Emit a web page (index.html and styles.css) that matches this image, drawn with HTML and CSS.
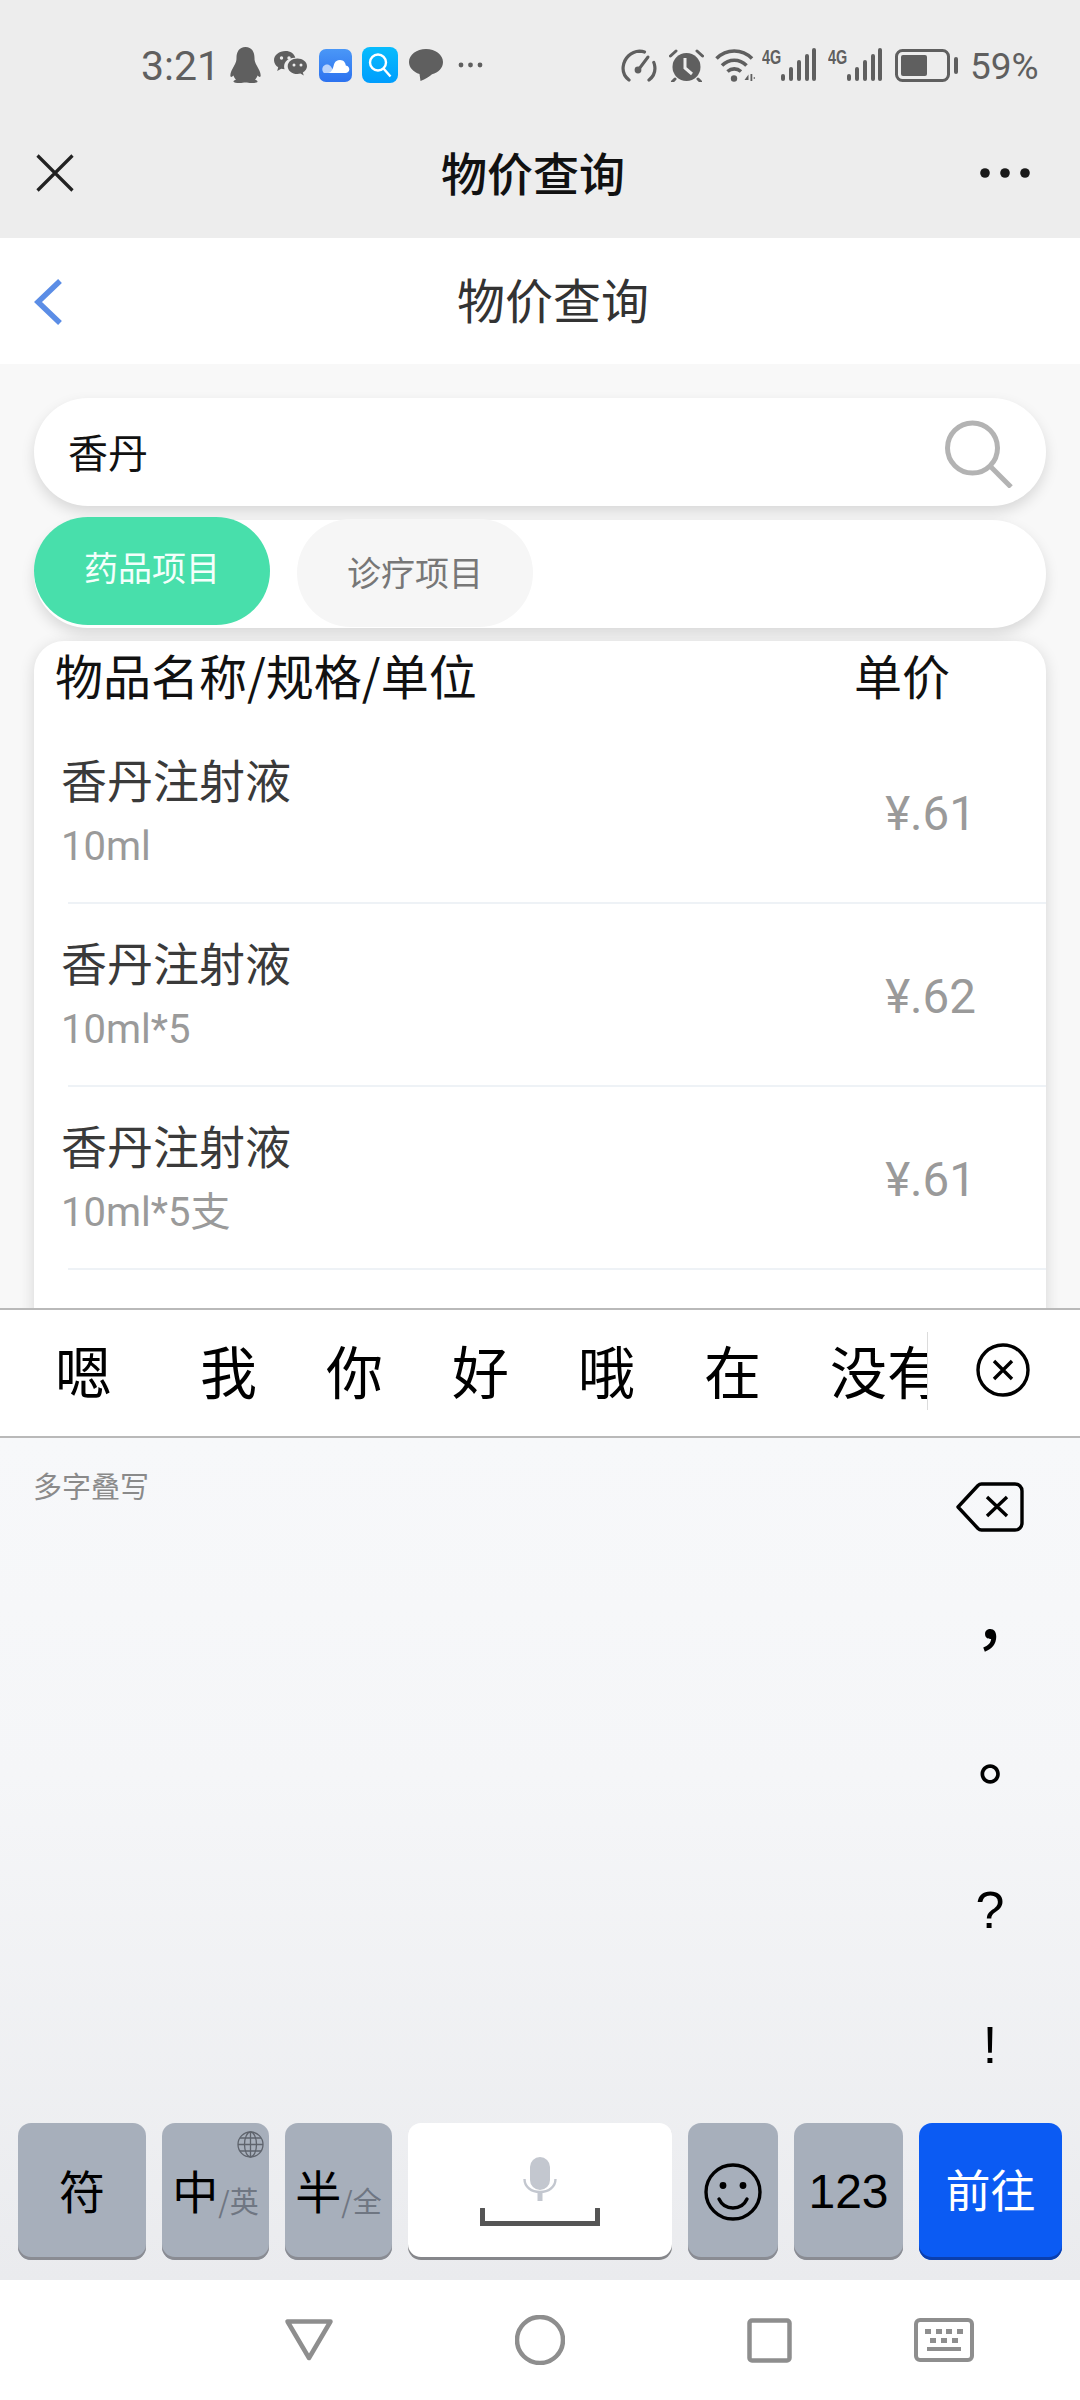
FILE: index.html
```html
<!DOCTYPE html>
<html lang="zh-CN">
<head>
<meta charset="utf-8">
<title>物价查询</title>
<link rel="stylesheet" href="styles.css">
</head>
<body>
<div class="screen">
  <header class="chrome">
    <div class="status">
      <div class="status-left">
        <span class="time">3:21</span>
        <svg class="ic-penguin" width="31" height="36" viewBox="0 0 31 36"><path fill="#5f5f5f" d="M15.500 0C9 0 6.500 5 6.500 11c0 3-.6 4.500-2.500 8-2 3.600-4 7-3.600 10 .3 1.500 1.600 1 3.100-.5.500 1.800 1.300 3 2.500 4-1.500.6-2.700 1.400-2.500 2.300.2 1 3 1.200 6 1.200 2.500 0 4-.5 6-.5s3.500.5 6 .5c3 0 5.800-.2 6-1.200.2-.9-1-1.700-2.500-2.300 1.200-1 2-2.200 2.500-4 1.500 1.500 2.800 2 3.100.5.4-3-1.600-6.400-3.600-10-1.900-3.500-2.500-5-2.500-8C24.500 5 22 0 15.500 0z"/></svg>
        <svg class="ic-wechat" width="33" height="29" viewBox="0 0 33 29"><path fill="#5f5f5f" d="M11.500 0C5.200 0 0 4 0 9.200c0 2.900 1.700 5.400 4.200 7.100L3.200 20l4-2.200c1.100.3 2.200.5 3.400.5-.3-1-.5-1.900-.5-2.900 0-5 4.600-8.700 10.300-8.700h.9C20.300 2.700 16.300 0 11.500 0z"/><path fill="#5f5f5f" d="M33 15.300c0-4.500-4.400-7.700-9.600-7.700-5.400 0-9.700 3.300-9.700 7.700s4.300 7.800 9.700 7.800c1 0 2.100-.2 3-.5l3.400 2-1-3c2.500-1.600 4.200-3.800 4.200-6.300z"/><circle cx="7.500" cy="7" r="1.700" fill="#ededed"/><circle cx="15" cy="7" r="1.700" fill="#ededed"/><circle cx="20" cy="14" r="1.500" fill="#ededed"/><circle cx="27" cy="14" r="1.500" fill="#ededed"/></svg>
        <svg class="ic-cloud" width="33" height="33" viewBox="0 0 33 33"><defs><linearGradient id="cloudBg" x1="0" y1="0" x2="0" y2="1"><stop offset="0" stop-color="#4a97f7"/><stop offset="1" stop-color="#2c72ef"/></linearGradient></defs><rect width="33" height="33" rx="7" fill="url(#cloudBg)"/><path fill="#b9d3fb" d="M5 24c-2.500-2-2.300-6.500 1-8 1.500-.7 3-.5 4 0 2 1 4 4 5 8z"/><path fill="#fff" d="M9 24c3 0 4-3 5-5 1-2.500 1-8 7-8 4 0 5.500 3 5.800 5.500 2.500.3 3.700 2.500 3.500 4.300-.2 2-1.800 3.200-3.800 3.200z"/></svg>
        <svg class="ic-find" width="36" height="36" viewBox="0 0 36 36"><defs><linearGradient id="findBg" x1="0" y1="0" x2="0" y2="1"><stop offset="0" stop-color="#07bcfd"/><stop offset="1" stop-color="#009dfd"/></linearGradient></defs><rect width="36" height="36" rx="8" fill="url(#findBg)"/><circle cx="16" cy="15.500" r="8" fill="none" stroke="#fff" stroke-width="2.400"/><path d="M21.500 21.500l7 8" stroke="#fff" stroke-width="2.400" fill="none"/></svg>
        <svg class="ic-bubble" width="34" height="33" viewBox="0 0 34 33"><path fill="#5f5f5f" d="M17 0C7.600 0 0 5.800 0 13c0 5.500 4.300 10 10.500 12l1 7c5-2 9-4.500 11.500-6.800C29.500 23.700 34 19 34 13 34 5.800 26.400 0 17 0z"/></svg>
        <svg class="ic-dots" width="25" height="6" viewBox="0 0 25 6"><circle cx="3" cy="3" r="2.400" fill="#5f5f5f"/><circle cx="12.500" cy="3" r="2.400" fill="#5f5f5f"/><circle cx="22" cy="3" r="2.400" fill="#5f5f5f"/></svg>
      </div>
      <div class="status-right">
        <svg class="ic-gauge" width="36" height="33" viewBox="0 0 36 33"><path d="M8 31C3.500 27.500 1.500 23 2.200 17.500 3.300 9 10 2.500 18.500 2.200c2 0 3.500.2 5 .8" fill="none" stroke="#5f5f5f" stroke-width="3.200" stroke-linecap="round"/><path d="M28 31c4.500-3.500 6.500-8 5.800-13.500-.2-1.500-.5-2.800-1-4" fill="none" stroke="#5f5f5f" stroke-width="3.200" stroke-linecap="round"/><path d="M18 20L27 8" stroke="#5f5f5f" stroke-width="3" stroke-linecap="round"/><circle cx="17" cy="21" r="3.400" fill="#5f5f5f"/></svg>
        <svg class="ic-alarm" width="35" height="33" viewBox="0 0 35 33"><circle cx="17.500" cy="18" r="14" fill="#5f5f5f"/><path d="M16 9v10l7 6" fill="none" stroke="#ededed" stroke-width="3"/><path d="M1.500 7L7 2M33.500 7L28 2M6 30l-2.500 2.500M29 30l2.500 2.500" stroke="#5f5f5f" stroke-width="3" stroke-linecap="round"/></svg>
        <svg class="ic-wifi" width="40" height="34" viewBox="0 0 40 34"><path d="M1.500 10.500C11.500 .5 27 .5 37 10.500M7 17.500c7-7 17.500-7 24.500 0M12.500 23.500c4-3.500 9.500-3.500 13.500 0" fill="none" stroke="#5f5f5f" stroke-width="3.600"/><circle cx="19" cy="30.500" r="3.200" fill="#5f5f5f"/><path d="M29.500 32l4-5.500v5.500zM35.500 26h1.800v7h-1.800zM38 30l2-1v2z" fill="#5f5f5f"/></svg>
        <div class="signal">
          <span class="net">4G</span>
          <svg width="35" height="33" viewBox="0 0 35 33"><rect x="0" y="26" width="4" height="7" rx="2" fill="#5f5f5f"/><rect x="8" y="19" width="4" height="14" rx="2" fill="#5f5f5f"/><rect x="16" y="12" width="4" height="21" rx="2" fill="#5f5f5f"/><rect x="24" y="6" width="4" height="27" rx="2" fill="#5f5f5f"/><rect x="31" y="0" width="4" height="33" rx="2" fill="#5f5f5f"/></svg>
        </div>
        <div class="signal">
          <span class="net">4G</span>
          <svg width="35" height="33" viewBox="0 0 35 33"><rect x="0" y="26" width="4" height="7" rx="2" fill="#5f5f5f"/><rect x="8" y="19" width="4" height="14" rx="2" fill="#5f5f5f"/><rect x="16" y="12" width="4" height="21" rx="2" fill="#5f5f5f"/><rect x="24" y="6" width="4" height="27" rx="2" fill="#5f5f5f"/><rect x="31" y="0" width="4" height="33" rx="2" fill="#5f5f5f"/></svg>
        </div>
        <svg class="ic-battery" width="63" height="33" viewBox="0 0 63 33"><rect x="1.500" y="1.500" width="52" height="30" rx="6" fill="none" stroke="#5f5f5f" stroke-width="3"/><rect x="6" y="6" width="26" height="21" rx="2" fill="#5f5f5f"/><rect x="59" y="8" width="4" height="17" rx="2" fill="#5f5f5f"/></svg>
        <span class="percent">59%</span>
      </div>
    </div>
    <div class="titlebar">
      <svg class="ic-close" width="38" height="38" viewBox="0 0 38 38"><path d="M1.500 1.500l35 35M36.500 1.500l-35 35" stroke="#222" stroke-width="3.200" fill="none"/></svg>
      <h1 class="app-title">物价查询</h1>
      <svg class="ic-more" width="50" height="10" viewBox="0 0 50 10"><circle cx="5" cy="5" r="4.800" fill="#1a1a1a"/><circle cx="25" cy="5" r="4.800" fill="#1a1a1a"/><circle cx="45" cy="5" r="4.800" fill="#1a1a1a"/></svg>
    </div>
  </header>

  <nav class="pagebar">
    <svg class="ic-back" width="30" height="48" viewBox="0 0 30 48"><path d="M27 3L5 24l22 21" fill="none" stroke="#5b8de6" stroke-width="5.500"/></svg>
    <h2 class="page-title">物价查询</h2>
  </nav>

  <main class="content">
    <div class="search">
      <span class="query">香丹</span>
      <svg class="ic-search" width="68" height="68" viewBox="0 0 68 68"><circle cx="27.500" cy="28" r="25" fill="none" stroke="#b3b3b3" stroke-width="5"/><path d="M45 46l21 21" stroke="#b3b3b3" stroke-width="5" fill="none"/></svg>
    </div>
    <div class="tabs">
      <div class="tab tab-active">药品项目</div>
      <div class="tab tab-idle">诊疗项目</div>
    </div>
    <section class="card">
      <div class="card-head">
        <span class="head-name">物品名称/规格/单位</span>
        <span class="head-price">单价</span>
      </div>
      <div class="row">
        <div class="item"><div class="item-name">香丹注射液</div><div class="item-spec">10ml</div></div>
        <div class="item-price">¥.61</div>
      </div>
      <div class="divider"></div>
      <div class="row">
        <div class="item"><div class="item-name">香丹注射液</div><div class="item-spec">10ml*5</div></div>
        <div class="item-price">¥.62</div>
      </div>
      <div class="divider"></div>
      <div class="row">
        <div class="item"><div class="item-name">香丹注射液</div><div class="item-spec">10ml*5支</div></div>
        <div class="item-price">¥.61</div>
      </div>
      <div class="divider"></div>
    </section>
  </main>

  <section class="candidates">
    <div class="cand-strip">
      <span class="cand cand-first">嗯</span>
      <span class="cand">我</span>
      <span class="cand">你</span>
      <span class="cand">好</span>
      <span class="cand">哦</span>
      <span class="cand">在</span>
      <span class="cand cand-last">没有</span>
    </div>
    <div class="cand-rule"></div>
    <svg class="ic-clear" width="54" height="54" viewBox="0 0 54 54"><circle cx="27" cy="27" r="25" fill="none" stroke="#000" stroke-width="3.400"/><path d="M18 18l18 18M36 18L18 36" stroke="#000" stroke-width="3.400" fill="none"/></svg>
  </section>

  <section class="keyboard">
    <div class="hand">
      <span class="hint">多字叠写</span>
      <div class="side">
        <div class="side-key"><svg width="68" height="50" viewBox="0 0 68 50"><path d="M2 25L22 3.500c1-1 2-1.500 3.500-1.500H59c4 0 7 3 7 7v32c0 4-3 7-7 7H25.500c-1.500 0-2.500-.5-3.500-1.500z" fill="none" stroke="#000" stroke-width="3.400" stroke-linejoin="round"/><path d="M31 15l20 19M51 15L31 34" stroke="#000" stroke-width="3.400" fill="none"/></svg></div>
        <div class="side-key punct-cjk">，</div>
        <div class="side-key punct-cjk">。</div>
        <div class="side-key punct">?</div>
        <div class="side-key punct">!</div>
      </div>
    </div>
    <div class="keys">
      <div class="key key-fu"><span class="key-main">符</span></div>
      <div class="key key-zh">
        <svg class="ic-globe" width="27" height="27" viewBox="0 0 27 27"><g fill="none" stroke="#5f646d" stroke-width="1.300"><circle cx="13.500" cy="13.500" r="12.500"/><ellipse cx="13.500" cy="13.500" rx="6" ry="12.500"/><path d="M13.500 1v25M1 13.500h25M3 7h21M3 20h21"/></g></svg>
        <span class="key-main">中</span><span class="key-sub">/英</span>
      </div>
      <div class="key key-half"><span class="key-main">半</span><span class="key-sub">/全</span></div>
      <div class="key key-space">
        <svg class="ic-mic" width="34" height="44" viewBox="0 0 34 44"><rect x="7" y="0" width="20" height="33" rx="10" fill="#c3c7cf"/><path d="M1.500 22c0 8 7 13 15.500 13s15.500-5 15.500-13" fill="none" stroke="#c3c7cf" stroke-width="2.400"/><rect x="14.500" y="34" width="5" height="10" fill="#c3c7cf"/></svg>
        <svg class="ic-bar" width="120" height="18" viewBox="0 0 120 18"><path d="M2.500 1v14.500h115V1" fill="none" stroke="#555" stroke-width="5" stroke-linecap="round"/></svg>
      </div>
      <div class="key key-emoji"><svg width="58" height="58" viewBox="0 0 58 58"><circle cx="29" cy="29" r="27" fill="none" stroke="#000" stroke-width="3.400"/><circle cx="19" cy="22.500" r="3.400" fill="#000"/><circle cx="39" cy="22.500" r="3.400" fill="#000"/><path d="M15 36c3 6.500 8 9 14 9s11-2.500 14-9" fill="none" stroke="#000" stroke-width="3.400" stroke-linecap="round"/></svg></div>
      <div class="key key-num"><span class="key-digits">123</span></div>
      <div class="key key-go"><span class="key-go-text">前往</span></div>
    </div>
  </section>

  <footer class="sysnav">
    <svg class="nav-back" width="50" height="44" viewBox="0 0 50 44"><path d="M3.500 3.500h43L25 40z" fill="none" stroke="#8e8e8e" stroke-width="4.500" stroke-linejoin="round"/></svg>
    <svg class="nav-home" width="50" height="50" viewBox="0 0 50 50"><circle cx="25" cy="25" r="23" fill="none" stroke="#8e8e8e" stroke-width="4.500"/></svg>
    <svg class="nav-recent" width="45" height="45" viewBox="0 0 45 45"><rect x="2.500" y="2.500" width="40" height="40" rx="2.500" fill="none" stroke="#8e8e8e" stroke-width="4.500"/></svg>
    <svg class="nav-kbd" width="60" height="44" viewBox="0 0 60 44"><rect x="2" y="2" width="56" height="40" rx="4" fill="none" stroke="#8e8e8e" stroke-width="4"/><path d="M11 11h6v5h-6zM22 11h6v5h-6zM32 11h6v5h-6zM43 11h6v5h-6zM16 20h6v5h-6zM27 20h6v5h-6zM38 20h6v5h-6zM13 29h34v4H13z" fill="#8e8e8e"/></svg>
  </footer>
</div>
</body>
</html>
```
FILE: styles.css
```css
* { box-sizing: border-box; }
html, body { margin: 0; padding: 0; }
body {
  width: 1080px;
  height: 2400px;
  overflow: hidden;
  font-family: "Noto Sans CJK SC", "Noto Sans", sans-serif;
  background: #fff;
}
.screen { width: 1080px; height: 2400px; display: flex; flex-direction: column; overflow: hidden; }
svg { display: block; flex: none; }

/* browser chrome */
.chrome { height: 238px; background: #ededed; flex: none; }
.status {
  height: 110px;
  padding: 47px 43px 0 141px;
  display: flex;
  justify-content: space-between;
  align-items: flex-start;
}
.status-left, .status-right { display: flex; align-items: flex-start; height: 40px; }
.time { font-family: Roboto, sans-serif; font-size: 41px; line-height: 40px; color: #5f5f5f; width: 74px; margin-top: -1px; }
.ic-penguin { margin-left: 15px; }
.ic-wechat { margin-left: 13px; margin-top: 4px; }
.ic-cloud { margin-left: 12px; margin-top: 2px; }
.ic-find { margin-left: 10px; }
.ic-bubble { margin-left: 11px; margin-top: 2px; }
.ic-dots { margin-left: 15px; margin-top: 15px; }
.ic-gauge { margin-top: 2px; }
.ic-alarm { margin-left: 12px; margin-top: 2px; }
.ic-wifi { margin-left: 11px; margin-top: 1px; }
.signal { display: flex; align-items: flex-start; margin-left: 7px; margin-top: 1px; height: 33px; }
.signal + .signal { margin-left: 12px; }
.net { font-family: "Liberation Sans", sans-serif; font-weight: 700; font-size: 20px; line-height: 18px; color: #5f5f5f; width: 19px; transform: scaleX(.72); transform-origin: left top; white-space: nowrap; }
.ic-battery { margin-left: 13px; margin-top: 2px; }
.percent { font-family: Roboto, sans-serif; font-size: 37px; line-height: 40px; color: #5f5f5f; margin-left: 12px; width: 67px; white-space: nowrap; }

.titlebar {
  height: 128px;
  padding: 0 50px 0 36px;
  display: flex;
  align-items: center;
  justify-content: space-between;
}
.app-title { margin: 0 0 6px 12px; font-size: 46px; line-height: 64px; font-weight: 500; color: #111; }
.ic-close { margin-top: -2px; }
.ic-more { margin-top: -2px; }

/* page header */
.pagebar {
  height: 126px;
  flex: none;
  background: #fff;
  display: flex;
  align-items: center;
  padding-left: 33px;
}
.page-title { margin: 0 0 6px 394px; font-size: 48px; line-height: 64px; font-weight: 400; color: #333; }
.ic-back { margin-top: 1px; }

/* content */
.content {
  height: 944px;
  flex: none;
  background: #f8f8f8;
  padding: 34px 34px 0;
  overflow: hidden;
}
.search {
  height: 108px;
  background: #fff;
  border-radius: 54px;
  box-shadow: 0 6px 14px rgba(0,0,0,.13);
  display: flex;
  align-items: center;
  justify-content: space-between;
  padding: 0 34px;
}
.query { font-size: 40px; line-height: 56px; color: #111; margin-top: -2px; }
.ic-search { margin-right: -1px; margin-top: 3px; }
.tabs {
  height: 108px;
  margin-top: 14px;
  background: #fff;
  border-radius: 54px;
  box-shadow: 0 6px 14px rgba(0,0,0,.13);
  display: flex;
  gap: 27px;
}
.tab {
  width: 236px;
  height: 108px;
  border-radius: 54px;
  display: flex;
  align-items: center;
  justify-content: center;
  font-size: 34px;
}
.tab-active { background: #48dfab; color: #f4fffb; margin-top: -3px; padding-bottom: 10px; }
.tab-idle { background: #f6f6f6; color: #777; margin-top: -1px; padding-bottom: 4px; }
.card {
  margin-top: 13px;
  background: #fff;
  border-radius: 30px;
  box-shadow: 0 4px 16px rgba(0,0,0,.14);
  height: 800px;
}
.card-head {
  height: 80px;
  padding: 0 96px 0 21px;
  display: flex;
  align-items: center;
  justify-content: space-between;
  font-size: 48px;
  line-height: 68px;
  color: #111;
}
.head-name, .head-price { margin-top: -15px; }
.row {
  height: 181px;
  padding: 0 70px 0 27px;
  display: flex;
  align-items: center;
  justify-content: space-between;
}
.item { height: 181px; padding-top: 24px; }
.item-name { font-size: 46px; line-height: 66px; color: #3a3a3a; }
.item-spec { font-family: Roboto, "Noto Sans CJK SC", sans-serif; font-size: 40px; line-height: 50px; color: #9a9a9a; margin-top: 11px; }
.item-price { font-family: Roboto, sans-serif; font-size: 47.500px; line-height: 60px; color: #9a9a9a; margin-top: 4px; }
.divider { height: 2px; margin-left: 34px; background: #eef2f6; }

/* candidates */
.candidates {
  height: 130px;
  flex: none;
  background: #fff;
  border-top: 2px solid #b9b9b9;
  border-bottom: 2px solid #b9b9b9;
  display: flex;
  align-items: center;
}
.cand-strip {
  width: 927px;
  overflow: hidden;
  display: flex;
  padding-left: 55px;
  flex: none;
  margin-bottom: 8px;
}
.cand { width: 126px; flex: none; font-size: 57px; line-height: 86px; color: #000; }
.cand-first { width: 145px; }
.cand-last { width: 200px; }
.cand-rule { width: 1px; height: 78px; background: #dcdcdc; flex: none; margin-top: -4px; }
.ic-clear { margin-left: 48px; margin-bottom: 6px; }

/* keyboard */
.keyboard {
  height: 842px;
  flex: none;
  background: linear-gradient(#f7f8fa, #f5f6f8 40%, #eaebee);
  display: flex;
  flex-direction: column;
}
.hand { height: 685px; display: flex; justify-content: space-between; padding: 0 20px 0 33px; flex: none; }
.hint { font-size: 29px; line-height: 40px; color: #8a8a8a; margin-top: 27px; }
.side { width: 140px; display: flex; flex-direction: column; padding-top: 1px; }
.side-key { height: 135px; display: flex; align-items: center; justify-content: center; color: #000; }
.punct-cjk { font-family: "Noto Sans CJK TC", sans-serif; font-size: 62px; line-height: 70px; font-weight: 500; padding-bottom: 11px; }
.punct { font-family: "Liberation Sans", sans-serif; font-size: 52px; line-height: 60px; padding-bottom: 3px; }
.keys { display: flex; gap: 16px; padding: 0 18px; height: 137px; flex: none; }
.key {
  position: relative;
  height: 137px;
  border-radius: 13px;
  background: #a7afbb;
  box-shadow: inset 0 -3px 0 #8a8c93;
  display: flex;
  align-items: center;
  justify-content: center;
  flex: none;
}
.key-fu { width: 128px; }
.key-zh { width: 107px; }
.key-half { width: 107px; }
.key-space { width: 264px; background: #fff; box-shadow: inset 0 -3px 0 #86878b; flex-direction: column; justify-content: flex-start; padding-top: 34px; }
.key-emoji { width: 90px; }
.key-num { width: 109px; }
.key-go { width: 143px; background: #0b5bf3; box-shadow: inset 0 -3px 0 #0b3fae; }
.key-main { font-size: 46px; line-height: 60px; color: #000; margin-top: -6px; }
.key-sub { font-size: 29px; line-height: 40px; color: #6f7682; margin-top: 16px; }
.ic-globe { position: absolute; top: 8px; right: 5px; }
.ic-mic { margin-bottom: 7px; }
.key-digits { font-family: "Liberation Sans", sans-serif; font-size: 48px; line-height: 60px; color: #000; }
.key-go-text { font-size: 45px; line-height: 60px; color: #fff; margin-top: -6px; }

/* system nav */
.sysnav { height: 120px; flex: none; background: #fff; display: flex; align-items: center; padding-left: 284px; }
.nav-home { margin-left: 181px; }
.nav-recent { margin-left: 182px; }
.nav-kbd { margin-left: 122px; }
```
